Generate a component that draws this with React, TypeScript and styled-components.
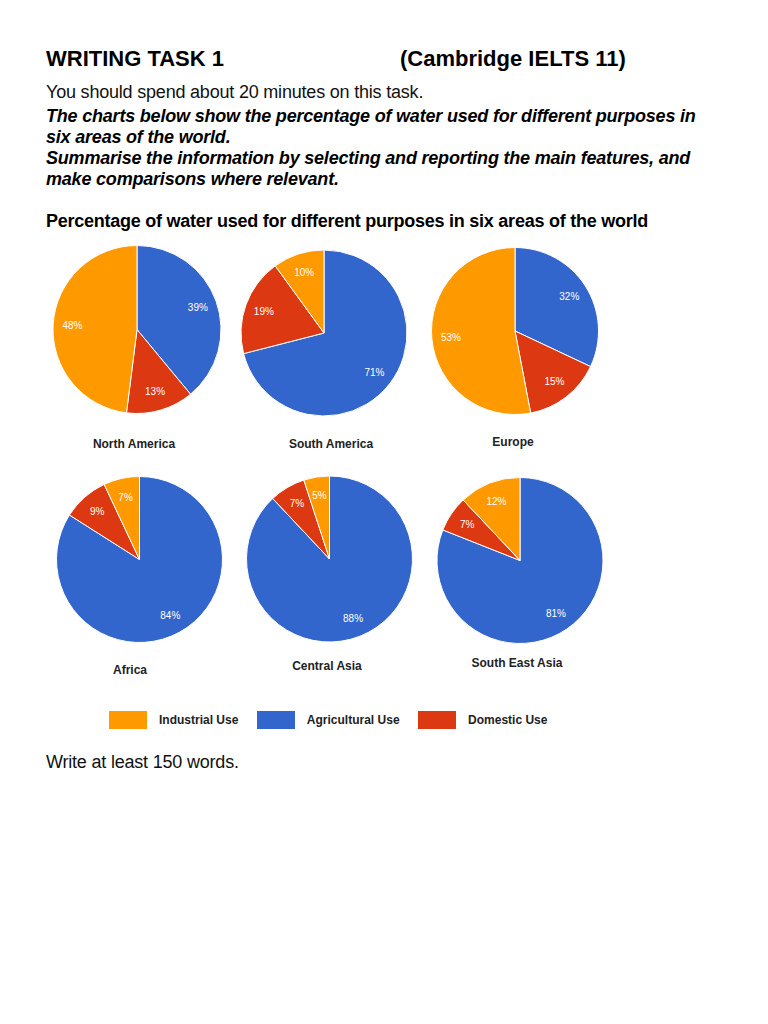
import React from "react";
import styled, { createGlobalStyle } from "styled-components";

const COLORS = {
  industrial: "#FF9900",
  agricultural: "#3366CC",
  domestic: "#DC3912",
} as const;

type UseKey = keyof typeof COLORS;

type Slice = { key: UseKey; value: number };

type Chart = {
  name: string;
  cx: number;
  cy: number;
  r: number;
  slices: Slice[];
  capTop: number;
  capShift: number;
};

const mk = (a: number, d: number, i: number): Slice[] => [
  { key: "agricultural", value: a },
  { key: "domestic", value: d },
  { key: "industrial", value: i },
];

const CHARTS: Chart[] = [
  { name: "North America", cx: 94, cy: 88.5, r: 84, slices: mk(39, 13, 48), capTop: 15, capShift: -4 },
  { name: "South America", cx: 91, cy: 92, r: 83, slices: mk(71, 19, 10), capTop: 15, capShift: 3 },
  { name: "Europe", cx: 92, cy: 90, r: 83.5, slices: mk(32, 15, 53), capTop: 13, capShift: -5 },
  { name: "Africa", cx: 96.5, cy: 89.5, r: 83, slices: mk(84, 9, 7), capTop: 12, capShift: -8 },
  { name: "Central Asia", cx: 96.5, cy: 89, r: 83, slices: mk(88, 7, 5), capTop: 8, capShift: -1 },
  { name: "South East Asia", cx: 97, cy: 90.5, r: 83, slices: mk(81, 7, 12), capTop: 5, capShift: -1 },
];

const LEGEND: { key: UseKey; label: string }[] = [
  { key: "industrial", label: "Industrial Use" },
  { key: "agricultural", label: "Agricultural Use" },
  { key: "domestic", label: "Domestic Use" },
];

const GlobalStyle = createGlobalStyle`
  html, body {
    margin: 0;
    padding: 0;
    background: #ffffff;
  }
  body {
    font-family: "Liberation Sans", Arial, Helvetica, sans-serif;
    color: #000000;
  }
`;

const Page = styled.div`
  width: 768px;
  min-height: 1024px;
  box-sizing: border-box;
  padding: 46px 0 0 46px;
  background: #ffffff;
`;

const TitleRow = styled.div`
  display: flex;
  font-size: 22px;
  line-height: 26px;
  font-weight: 700;
  color: #000;
`;

const TitleLeft = styled.span`
  width: 354px;
  flex: none;
`;

const BodyText = styled.p<{ $top: number }>`
  margin: ${(p) => p.$top}px 0 0 0;
  font-size: 18px;
  line-height: 22px;
  letter-spacing: -0.2px;
  color: #111;
`;

const TaskText = styled.p`
  margin: 2.5px 0 0 0;
  font-size: 18px;
  line-height: 21px;
  letter-spacing: -0.2px;
  font-weight: 700;
  font-style: italic;
  color: #000;
`;

const ChartTitle = styled.h2`
  margin: 20.5px 0 0 0;
  font-size: 18px;
  line-height: 22px;
  letter-spacing: -0.25px;
  font-weight: 700;
  color: #000;
`;

const ChartGrid = styled.div`
  margin: 8.5px 0 0 -3px;
  display: grid;
  grid-template-columns: repeat(3, 190px);
  row-gap: 18px;
  align-items: start;
`;

const ChartCell = styled.div`
  display: flex;
  flex-direction: column;
  align-items: center;
`;

const PieSvg = styled.svg`
  display: block;
  width: 190px;
  height: 180px;
`;

const Caption = styled.div<{ $top: number; $shift: number }>`
  margin: ${(p) => p.$top}px 0 0 ${(p) => p.$shift * 2}px;
  font-size: 12px;
  line-height: 16px;
  font-weight: 700;
  color: #222;
  white-space: nowrap;
`;

const Legend = styled.div`
  margin: 33px 0 0 63px;
  display: flex;
  align-items: center;
  gap: 18.5px;
`;

const LegendItem = styled.div`
  display: flex;
  align-items: center;
  gap: 12px;
`;

const Swatch = styled.span<{ $color: string }>`
  display: block;
  width: 38px;
  height: 18px;
  background: ${(p) => p.$color};
`;

const LegendLabel = styled.span`
  font-size: 12px;
  line-height: 18px;
  font-weight: 700;
  color: #222;
`;

function point(cx: number, cy: number, r: number, frac: number) {
  const t = frac * Math.PI * 2 - Math.PI / 2;
  return [cx + r * Math.cos(t), cy + r * Math.sin(t)];
}

function Pie({ chart }: { chart: Chart }) {
  const { cx, cy, r, slices } = chart;
  let acc = 0;
  const parts = slices.map((s) => {
    const a0 = acc / 100;
    acc += s.value;
    const a1 = acc / 100;
    const [x0, y0] = point(cx, cy, r, a0);
    const [x1, y1] = point(cx, cy, r, a1);
    const large = a1 - a0 > 0.5 ? 1 : 0;
    const d = `M ${cx} ${cy} L ${x0} ${y0} A ${r} ${r} 0 ${large} 1 ${x1} ${y1} Z`;
    const [lx, ly] = point(cx, cy, r * 0.77, (a0 + a1) / 2);
    return { d, color: COLORS[s.key], lx, ly, text: `${s.value}%`, key: s.key };
  });
  return (
    <PieSvg viewBox="0 0 190 180">
      {parts.map((p) => (
        <path key={p.key} d={p.d} fill={p.color} stroke="#ffffff" strokeWidth={1} strokeLinejoin="round" />
      ))}
      {parts.map((p) => (
        <text
          key={p.key + "-t"}
          x={p.lx}
          y={p.ly}
          fill="#ffffff"
          fontSize={10}
          fontFamily="'Liberation Sans', Arial, sans-serif"
          textAnchor="middle"
          dominantBaseline="central"
        >
          {p.text}
        </text>
      ))}
    </PieSvg>
  );
}

export default function App() {
  return (
    <>
      <GlobalStyle />
      <Page>
        <TitleRow>
          <TitleLeft>WRITING TASK 1</TitleLeft>
          <span>(Cambridge IELTS 11)</span>
        </TitleRow>
        <BodyText $top={9}>You should spend about 20 minutes on this task.</BodyText>
        <TaskText>
          The charts below show the percentage of water used for different purposes in
          <br />
          six areas of the world.
          <br />
          Summarise the information by selecting and reporting the main features, and
          <br />
          make comparisons where relevant.
        </TaskText>
        <ChartTitle>Percentage of water used for different purposes in six areas of the world</ChartTitle>
        <ChartGrid>
          {CHARTS.map((c) => (
            <ChartCell key={c.name}>
              <Pie chart={c} />
              <Caption $top={c.capTop} $shift={c.capShift}>
                {c.name}
              </Caption>
            </ChartCell>
          ))}
        </ChartGrid>
        <Legend>
          {LEGEND.map((l) => (
            <LegendItem key={l.key}>
              <Swatch $color={COLORS[l.key]} />
              <LegendLabel>{l.label}</LegendLabel>
            </LegendItem>
          ))}
        </Legend>
        <BodyText $top={22.5}>Write at least 150 words.</BodyText>
      </Page>
    </>
  );
}
